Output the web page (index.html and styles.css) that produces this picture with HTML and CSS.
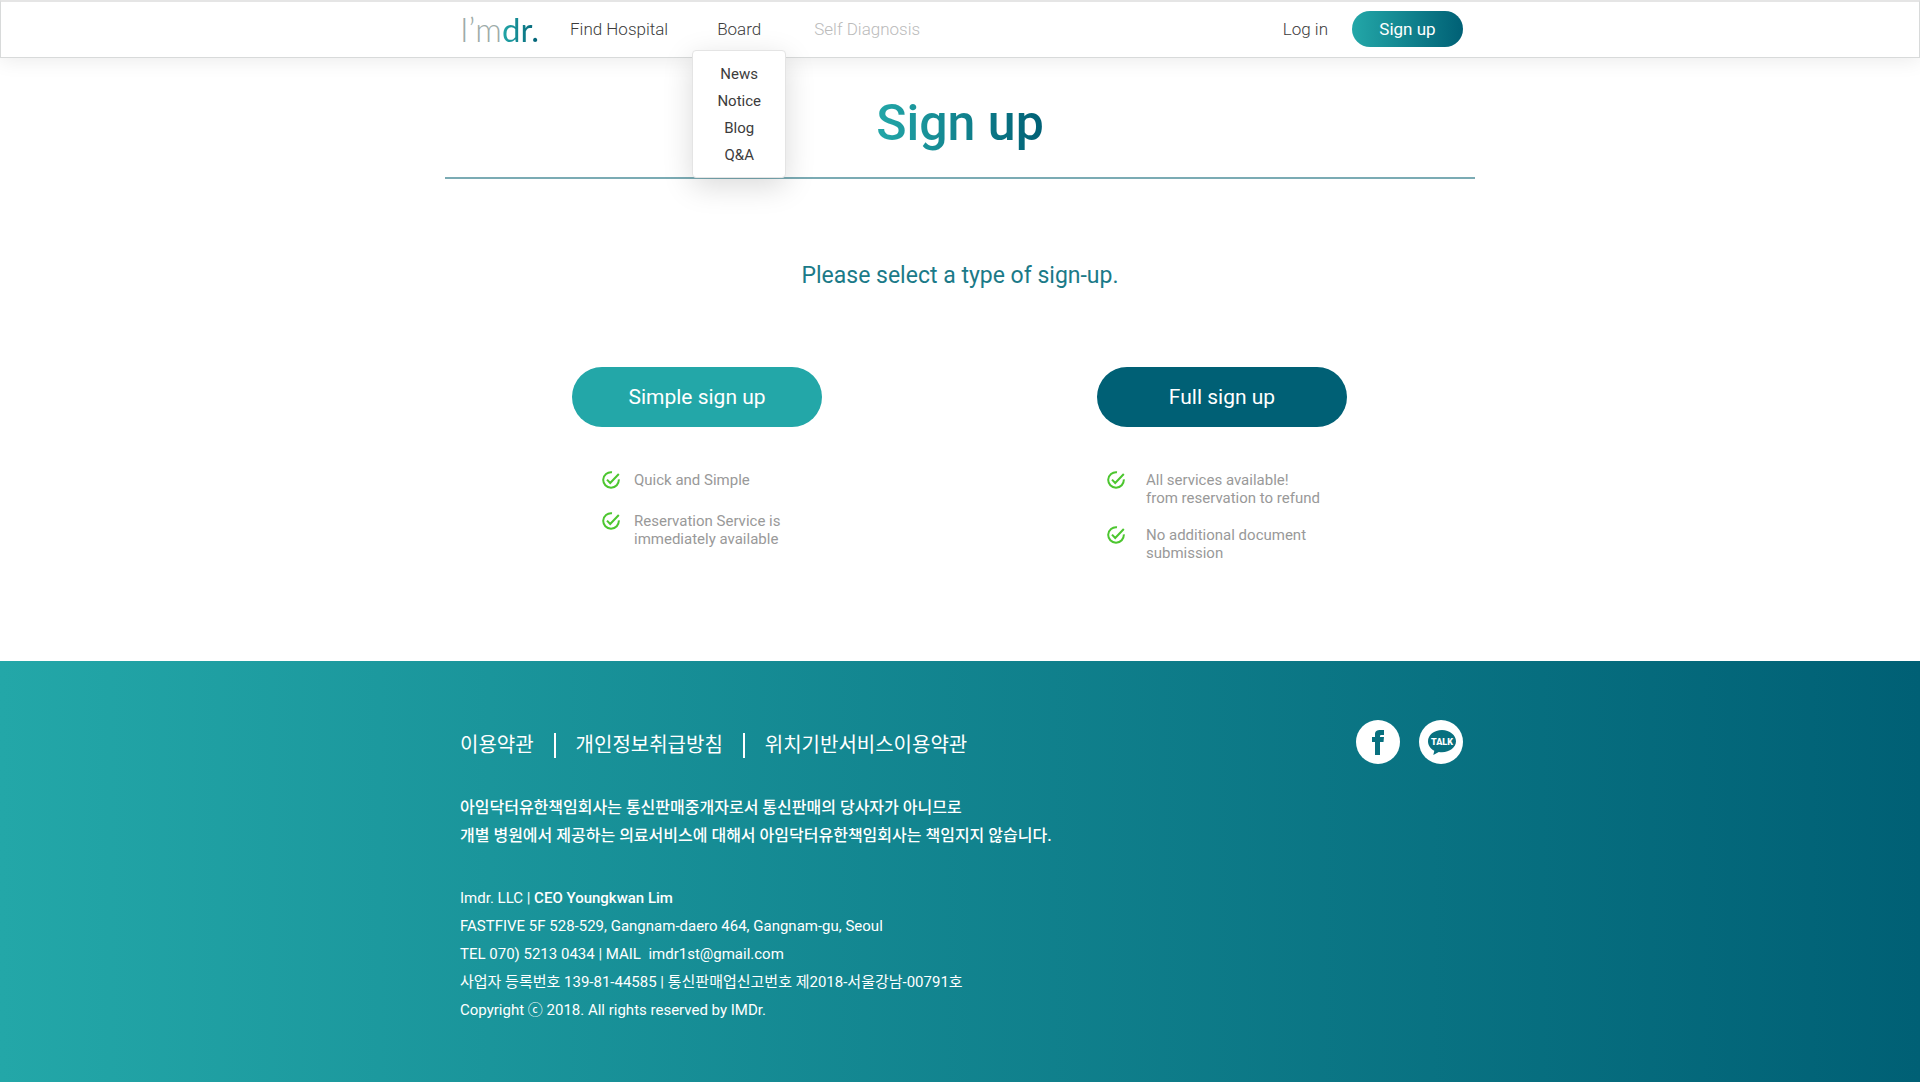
FILE: index.html
```html
<!DOCTYPE html>
<html lang="en">
<head>
<meta charset="utf-8">
<title>Sign up - Imdr</title>
<meta name="viewport" content="width=device-width, initial-scale=1">
<link rel="stylesheet" href="styles.css">
</head>
<body>
<header class="site-header">
  <div class="container header-inner">
    <a class="logo" href="#"><span class="logo-im">I’m</span><span class="logo-dr">dr.</span></a>
    <nav class="main-nav" aria-label="Main">
      <a href="#">Find Hospital</a>
      <div class="has-menu">
        <a href="#">Board</a>
        <div class="menu">
          <a href="#">News</a>
          <a href="#">Notice</a>
          <a href="#">Blog</a>
          <a href="#">Q&amp;A</a>
        </div>
      </div>
      <a class="disabled" href="#">Self Diagnosis</a>
    </nav>
    <div class="account">
      <a href="#">Log in</a>
      <button class="signup-button" type="button">Sign up</button>
    </div>
  </div>
</header>

<main class="page">
  <div class="title-bar"><h1>Sign up</h1></div>
  <p class="lead">Please select a type of sign-up.</p>
  <div class="options">
    <section class="option option-simple">
      <button class="option-button" type="button">Simple sign up</button>
      <ul class="features">
        <li><svg class="check" viewBox="0 0 18 18" aria-hidden="true"><path d="M10 1.2A7.8 7.8 0 1 0 16.8 8.4M5 8.6l3.2 3.4L16.8 3"/></svg><span>Quick and Simple</span></li>
        <li><svg class="check" viewBox="0 0 18 18" aria-hidden="true"><path d="M10 1.2A7.8 7.8 0 1 0 16.8 8.4M5 8.6l3.2 3.4L16.8 3"/></svg><span>Reservation Service is<br>immediately available</span></li>
      </ul>
    </section>
    <section class="option option-full">
      <button class="option-button" type="button">Full sign up</button>
      <ul class="features">
        <li><svg class="check" viewBox="0 0 18 18" aria-hidden="true"><path d="M10 1.2A7.8 7.8 0 1 0 16.8 8.4M5 8.6l3.2 3.4L16.8 3"/></svg><span>All services available!<br>from reservation to refund</span></li>
        <li><svg class="check" viewBox="0 0 18 18" aria-hidden="true"><path d="M10 1.2A7.8 7.8 0 1 0 16.8 8.4M5 8.6l3.2 3.4L16.8 3"/></svg><span>No additional document<br>submission</span></li>
      </ul>
    </section>
  </div>
</main>

<footer class="site-footer">
  <div class="container">
    <div class="footer-top">
      <nav class="policies" lang="ko" aria-label="Policies">
        <a href="#">이용약관</a>
        <a href="#">개인정보취급방침</a>
        <a href="#">위치기반서비스이용약관</a>
      </nav>
      <div class="social">
        <a href="#" aria-label="Facebook"><svg viewBox="0 0 44 44"><circle cx="22" cy="22" r="22" fill="#fff"/><path fill="#08707f" d="M19 35V22h-3v-5h3v-2.500C19 11 21 10 24.500 10H28v5h-2.500c-1.300 0-1.500.5-1.500 1.500V17h4l-.5 5H24v13z"/></svg></a>
        <a href="#" aria-label="KakaoTalk"><svg viewBox="0 0 44 44"><circle cx="22" cy="22" r="22" fill="#fff"/><path fill="#08707f" d="M23 10c-8 0-14 5-14 11.300 0 4 2.500 7.500 6.300 9.500L14.300 35l5.500-3.100c1 .2 2.100.3 3.200.3 7.800 0 14-4.900 14-10.900S30.800 10 23 10z"/><text x="23" y="25" text-anchor="middle" class="talk">TALK</text></svg></a>
      </div>
    </div>
    <p class="notice" lang="ko">아임닥터유한책임회사는 통신판매중개자로서 통신판매의 당사자가 아니므로<br>개별 병원에서 제공하는 의료서비스에 대해서 아임닥터유한책임회사는 책임지지 않습니다.</p>
    <address class="company">
      Imdr. LLC | <strong>CEO Youngkwan Lim</strong><br>
      FASTFIVE 5F 528-529, Gangnam-daero 464, Gangnam-gu, Seoul<br>
      TEL 070) 5213 0434 | MAIL&nbsp; imdr1st@gmail.com<br>
      <span lang="ko">사업자 등록번호 139-81-44585 | 통신판매업신고번호 제2018-서울강남-00791호</span><br>
      Copyright ⓒ 2018. All rights reserved by IMDr.
    </address>
  </div>
</footer>
</body>
</html>
```
FILE: styles.css
```css
:root {
  --teal: #23a7a8;
  --navy: #006075;
  --brand: linear-gradient(90deg, var(--teal), var(--navy));
}

* { box-sizing: border-box; }

body {
  margin: 0;
  min-height: 100vh;
  display: flex;
  flex-direction: column;
  background: #fff;
  color: #3c3c3c;
  font-family: Roboto, "Noto Sans CJK KR", sans-serif;
  font-size: 16px;
}

a { color: inherit; text-decoration: none; }
h1, p, ul { margin: 0; padding: 0; }
button { border: 0; color: #fff; font: inherit; cursor: pointer; }

.container {
  width: 100%;
  max-width: 1030px;
  margin: 0 auto;
  padding: 0 12px 0 15px;
}

.site-header {
  border: 1px solid #d8dada;
  border-top: 2px solid #e5e5e5;
  box-shadow: 0 3px 20px rgba(0, 0, 0, .08);
}

.header-inner {
  display: flex;
  align-items: center;
  height: 55px;
  padding-bottom: 2px;
  font-size: 17px;
  font-weight: 300;
}

.logo {
  width: 110px;
  font-family: Lato, sans-serif;
  font-size: 33px;
  font-weight: 400;
  line-height: 40px;
  white-space: nowrap;
}
.logo-im { color: #9daba8; font-weight: 300; }
.logo-dr {
  background: var(--brand);
  background-clip: text;
  -webkit-background-clip: text;
  color: transparent;
}

.main-nav { display: flex; }
.has-menu { position: relative; margin: 0 53px 0 49px; }
.disabled { color: #bbb; }

.menu {
  position: absolute;
  top: 31px;
  left: 50%;
  z-index: 1;
  display: flex;
  flex-direction: column;
  width: 94px;
  margin-left: -47px;
  padding: 10px 0 8px;
  border: 1px solid #e4e4e4;
  border-radius: 4px;
  background: #fff;
  box-shadow: 0 8px 30px rgba(0, 0, 0, .15);
  font-size: 15px;
  font-weight: 400;
  line-height: 27px;
  text-align: center;
}

.account { display: flex; align-items: center; gap: 24px; margin-left: auto; }

.signup-button {
  width: 111px;
  height: 36px;
  border-radius: 18px;
  background: var(--brand);
  font-weight: 400;
}

.page {
  flex: 1;
  width: 100%;
  max-width: 1030px;
  margin: 0 auto;
}

.title-bar {
  border-bottom: 2px solid #7babb4;
  padding: 33px 0 22px;
  text-align: center;
}
.title-bar h1 {
  display: inline-block;
  background: var(--brand);
  background-clip: text;
  -webkit-background-clip: text;
  color: transparent;
  font-size: 50px;
  font-weight: 500;
  line-height: 64px;
}

.lead {
  margin-top: 81px;
  color: #1b7a88;
  font-size: 23px;
  line-height: 32px;
  text-align: center;
}

.options {
  display: flex;
  justify-content: space-between;
  margin-top: 75px;
  padding: 0 128px 0 127px;
}
.option { width: 250px; }
.option-button {
  width: 250px;
  height: 60px;
  border-radius: 30px;
  font-size: 21px;
}
.option-simple .option-button { background: var(--teal); }
.option-full .option-button { background: var(--navy); }

.features {
  display: grid;
  gap: 19px;
  margin-top: 44px;
  color: #999;
  font-size: 15px;
  line-height: 18px;
  list-style: none;
  white-space: nowrap;
}
.features li { display: flex; gap: 14px; }
.option-simple .features { gap: 23px; padding-left: 30px; }
.option-full .features { padding-left: 10px; }
.option-full li { gap: 21px; }

.check {
  width: 18px;
  height: 18px;
  fill: none;
  stroke: #4cc62f;
  stroke-width: 2;
}

.site-footer {
  padding: 59px 0 58px;
  background: var(--brand);
  color: #fff;
}
.footer-top { display: flex; justify-content: space-between; align-items: center; }

.policies {
  display: flex;
  padding-top: 6px;
  font-size: 20px;
  font-weight: 400;
  line-height: 25px;
}
.policies a + a { margin-left: 20px; padding-left: 20px; border-left: 2px solid #fff; }

.social { display: flex; gap: 19px; }
.social svg { display: block; width: 44px; height: 44px; }
.talk { fill: #fff; font-size: 9px; font-weight: 900; }

.notice { margin-top: 30px; font-weight: 500; line-height: 28px; }

.company {
  margin-top: 34px;
  font-size: 15px;
  font-style: normal;
  line-height: 28px;
}
.company strong { font-weight: 500; }
```
